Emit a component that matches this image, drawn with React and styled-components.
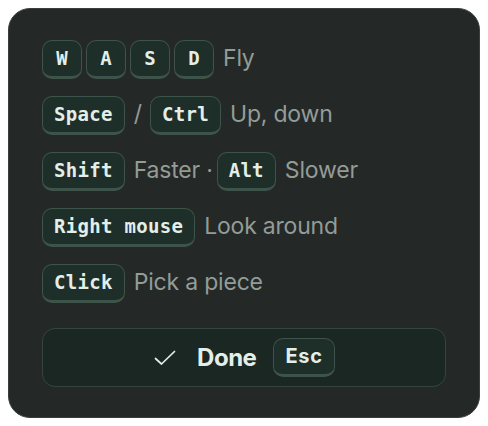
import React from "react";
import styled, { createGlobalStyle } from "styled-components";

const Global = createGlobalStyle`
  body {
    margin: 0;
    padding: 8px;
    background: #ffffff;
    font-family: Inter, "Noto Sans", sans-serif;
  }
`;

const Panel = styled.div`
  width: 472px;
  height: 410px;
  box-sizing: border-box;
  background: #242827;
  border: 1px solid #3a3f3d;
  border-radius: 22px;
  padding: 31px 33px 30px 33px;
  display: flex;
  flex-direction: column;
`;

const List = styled.div`
  display: flex;
  flex-direction: column;
  gap: 17px;
`;

const Row = styled.div`
  display: flex;
  align-items: center;
  gap: 4px;
  height: 39px;
`;

const Key = styled.kbd`
  box-sizing: border-box;
  height: 39px;
  min-width: 40px;
  padding: 0 11px 2px;
  display: inline-flex;
  align-items: center;
  justify-content: center;
  background: #1e2e28;
  border: 1.5px solid #3e5349;
  border-bottom-width: 3px;
  border-radius: 10px;
  color: #e4eee8;
  font-family: ${(p) => (p.$sans ? 'Inter, "Noto Sans", sans-serif' : '"DejaVu Sans Mono", monospace')};
  font-weight: 700;
  font-size: ${(p) => (p.$sans ? "20px" : "19px")};
  letter-spacing: ${(p) => (p.$sans ? "0.8px" : "0.3px")};
`;

const Label = styled.span`
  color: #939c97;
  font-size: 23px;
  font-weight: 400;
  margin-left: 5px;
  padding-bottom: 4px;
  letter-spacing: -0.2px;
`;

const Sep = styled.span`
  color: #939c97;
  font-size: 23px;
  margin: 0 4px 0 5px;
  padding-bottom: 4px;
`;

const DoneButton = styled.button`
  margin-top: 25px;
  height: 59px;
  width: 100%;
  box-sizing: border-box;
  background: #1a2722;
  border: 1.5px solid #34453d;
  border-radius: 13px;
  display: flex;
  align-items: center;
  justify-content: center;
  color: #e4eee8;
  font-family: Inter, "Noto Sans", sans-serif;
  font-size: 24px;
  font-weight: 700;
  cursor: pointer;
`;

const DoneText = styled.span`
  letter-spacing: -0.5px;
  margin: 0 17px 0 20px;
`;

const Check = () => (
  <svg width="24" height="24" viewBox="0 0 24 24" fill="none" stroke="#e4eee8" strokeWidth="1.7" strokeLinecap="round" strokeLinejoin="round">
    <path d="M2.5 12.5l6 5.5L21.5 5.5" />
  </svg>
);

export default function App() {
  return (
    <>
      <Global />
      <Panel>
        <List>
          <Row>
            <Key>W</Key>
            <Key>A</Key>
            <Key>S</Key>
            <Key>D</Key>
            <Label>Fly</Label>
          </Row>
          <Row>
            <Key>Space</Key>
            <Sep>/</Sep>
            <Key>Ctrl</Key>
            <Label>Up, down</Label>
          </Row>
          <Row>
            <Key>Shift</Key>
            <Label>Faster ·</Label>
            <Key>Alt</Key>
            <Label>Slower</Label>
          </Row>
          <Row>
            <Key>Right mouse</Key>
            <Label>Look around</Label>
          </Row>
          <Row>
            <Key>Click</Key>
            <Label>Pick a piece</Label>
          </Row>
        </List>
        <DoneButton>
          <Check />
          <DoneText>Done</DoneText>
          <Key $sans>Esc</Key>
        </DoneButton>
      </Panel>
    </>
  );
}
